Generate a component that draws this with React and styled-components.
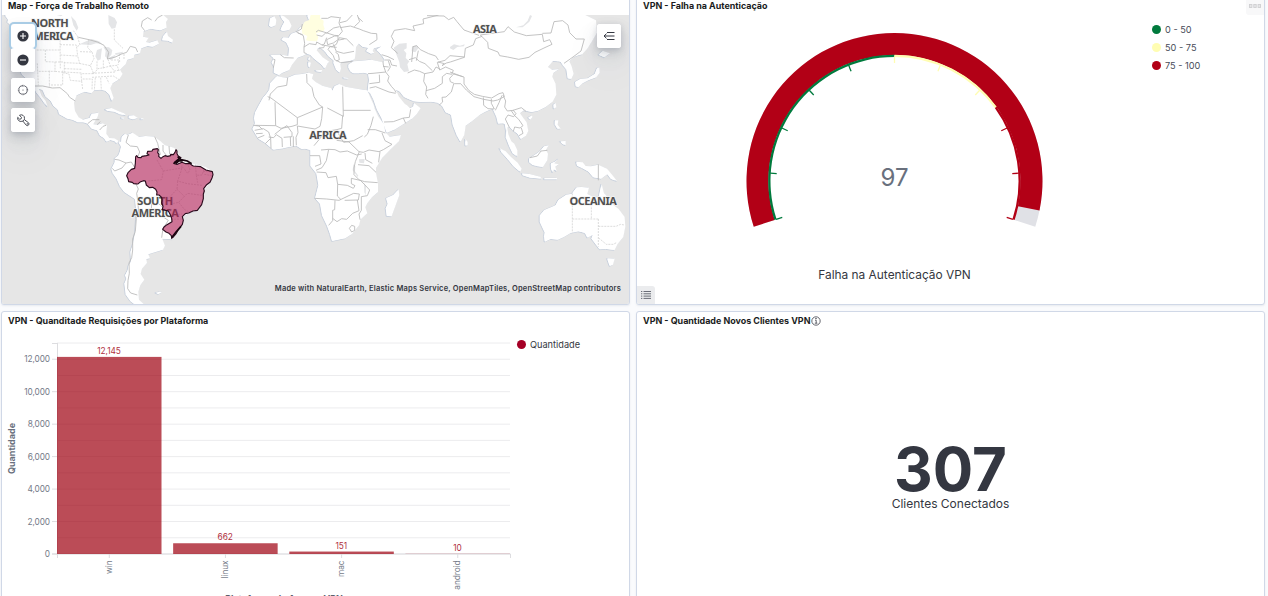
import React from "react";
import styled, { createGlobalStyle } from "styled-components";

const GlobalStyle = createGlobalStyle`
  * { box-sizing: border-box; }
  body { margin: 0; background: #fafbfd; overflow: hidden; }
`;

const Dashboard = styled.main`
  display: grid;
  grid-template-columns: 629px 629px;
  grid-template-rows: 309px 310px;
  gap: 6px;
  height: 600px;
  margin-top: -4px;
  padding-left: 1px;
  overflow: hidden;
  font-family: Inter, "Liberation Sans", sans-serif;
  color: #343741;
`;

const Panel = styled.section`
  position: relative;
  display: flex;
  flex-direction: column;
  background: #fff;
  border: 1px solid #d0d8e7;
  border-radius: 3px;
  box-shadow: 0 1px 2px rgba(152, 162, 179, 0.18);
  overflow: hidden;
`;

const PanelTitle = styled.h2`
  display: flex;
  align-items: center;
  gap: 1px;
  height: 18px;
  flex: none;
  margin: 0;
  padding: 0 6px 1px;
  font-size: 8.93px;
  font-weight: 700;
  line-height: 14px;
  color: #1a1c21;
  white-space: nowrap;
`;

const MapArea = styled.div`
  position: relative;
  flex: 1;
  background: #e6e6e6;
  overflow: hidden;
`;

const MapSvg = styled.svg`
  display: block;
  width: 628px;
  height: 289px;
`;

const MapControls = styled.div`
  position: absolute;
  left: 9px;
  top: 9px;
  display: flex;
  flex-direction: column;
  gap: 6px;
`;

const ControlGroup = styled.div`
  width: 24px;
  border-radius: 3px;
  background: #fff;
  box-shadow: 0 1px 5px rgba(65, 78, 101, 0.12), 0 4px 8px rgba(65, 78, 101, 0.15),
    0 8px 18px rgba(65, 78, 101, 0.12), 0 18px 40px rgba(65, 78, 101, 0.08);
`;

const ControlButton = styled.button`
  display: flex;
  align-items: center;
  justify-content: center;
  width: 24px;
  height: 24px;
  padding: 0;
  border: 0;
  border-radius: 3px;
  background: #fff;
  box-shadow: ${(p) => (p.$focused ? "0 0 0 2px #a9cce5" : "none")};
`;

const LegendToggle = styled(ControlGroup)`
  position: absolute;
  top: 9px;
  right: 8px;
`;

const Attribution = styled.div`
  position: absolute;
  right: 8px;
  bottom: 9px;
  font-size: 7.5px;
  font-weight: 600;
  line-height: 12px;
  letter-spacing: 0.2px;
  color: #343741;
  white-space: nowrap;
`;

const ChartSvg = styled.svg`
  display: block;
  flex: none;
  font-family: Inter, "Liberation Sans", sans-serif;
`;

const Legend = styled.ul`
  position: absolute;
  left: ${(p) => p.$left}px;
  top: ${(p) => p.$top}px;
  display: flex;
  flex-direction: column;
  margin: 0;
  padding: 0;
  list-style: none;
`;

const LegendItem = styled.li`
  display: flex;
  align-items: center;
  gap: 4px;
  height: 18px;
  font-size: 9.2px;
  color: ${(p) => p.$color || "#474c58"};
  white-space: nowrap;
  &::before {
    content: "";
    width: 9px;
    height: 9px;
    border-radius: 50%;
    background: ${(p) => p.$dot};
  }
`;

const CornerButton = styled.button`
  position: absolute;
  display: flex;
  align-items: center;
  justify-content: center;
  width: 18px;
  height: 18px;
  padding: 0;
  border: 0;
  background: ${(p) => (p.$bottom ? "#ebecee" : "#f8f8f9")};
  ${(p) =>
    p.$bottom
      ? "left: 0; bottom: 0; border-radius: 0 3px 0 0;"
      : "right: 0; top: 0; border-radius: 0 0 0 3px;"}
`;

const Metric = styled.div`
  display: flex;
  flex: 1;
  flex-direction: column;
  align-items: center;
  padding-top: 117px;
`;

const MetricValue = styled.strong`
  font-size: 60px;
  font-weight: 700;
  line-height: 44px;
  height: 49px;
`;

const MetricLabel = styled.span`
  font-size: 12px;
  line-height: 16px;
`;

/* Map geometry, in thirds of a pixel. */
const LAND = [
  "M14 45 L24 58 22 66 34 78 38 100 44 120 42 150 50 180 58 205 66 224 78 234 98 254 108 276 121 292 135 312 142 320 136 303 124 288 116 266 128 270 136 289 152 302 160 317 174 329 177 342 186 347 202 356 217 359 234 367 251 367 263 371 275 386 292 391 300 407 312 414 319 425 331 420 345 424 350 431 354 422 342 415 327 414 318 401 320 377 307 370 291 374 279 373 292 350 295 338 274 341 269 353 248 359 235 352 224 333 221 308 229 286 253 275 274 279 282 271 301 269 316 272 328 283 335 303 340 294 330 265 337 250 357 238 367 222 359 209 376 193 381 179 400 174 402 164 419 160 423 145 442 138 458 140 476 131 471 121 447 128 437 126 445 113 428 110 430 94 451 86 481 91 499 83 497 67 503 57 489 45 Z",
  "M489 108 L500 95 503 108 518 119 516 128 504 122 486 121 Z",
  "M314 328 L334 324 352 332 371 340 377 346 360 343 343 335 324 333 Z",
  "M386 347 L400 346 413 354 398 358 386 354 Z M363 352 l9 1 -2 3 -7 -1z M421 355 l8 0 0 3 -8 0z",
  "M354 424 L363 439 359 456 354 467 344 474 344 486 334 506 338 519 350 536 360 559 373 576 405 597 408 626 408 658 405 697 399 730 391 755 393 784 385 797 383 810 375 825 379 836 373 850 377 883 392 904 403 912 430 912 416 899 414 876 420 856 432 839 421 822 425 806 440 789 438 777 449 775 444 763 458 758 488 749 494 737 486 716 518 718 528 695 545 677 549 651 567 639 591 632 606 613 610 573 630 547 638 530 637 515 615 500 586 493 568 488 542 476 531 453 521 443 493 435 481 424 462 410 436 408 416 411 397 398 381 405 374 401 365 410 363 426 Z",
  "M466 878 L478 875 485 876 475 882 Z",
  "M830 228 L846 232 860 234 884 224 905 222 925 218 939 223 935 236 946 246 966 257 992 264 997 272 1003 258 1017 252 1036 260 1061 265 1088 269 1101 271 1109 290 1120 314 1123 326 1134 350 1151 373 1155 397 1168 410 1202 405 1196 424 1172 447 1146 473 1127 504 1127 519 1133 550 1133 576 1115 592 1101 610 1095 622 1101 640 1080 659 1077 675 1056 701 1035 715 996 723 990 702 981 677 966 646 960 611 945 594 955 555 949 520 931 497 931 468 931 450 915 446 905 447 889 437 865 441 850 445 820 449 795 428 775 416 766 401 757 386 765 370 762 354 765 337 777 314 790 291 800 280 808 268 810 249 Z",
  "M1195 568 L1197 586 1180 632 1174 649 1160 648 1157 624 1163 611 1158 594 1179 585 Z",
  "M810 165 L845 164 865 168 867 144 859 127 844 119 849 112 866 113 873 101 890 95 900 82 914 76 927 60 921 45 L1755 45 1787 61 1790 98 1776 122 1761 146 1746 163 1734 166 1721 171 1707 184 1714 199 1720 222 1713 237 1703 235 1699 208 1689 196 1682 185 1674 184 1658 183 1643 201 1655 209 1676 207 1659 219 1656 230 1666 252 1668 284 1657 305 1636 321 1614 332 1595 336 1570 331 1559 340 1569 354 1579 367 1584 393 1577 407 1562 417 1553 401 1539 391 1528 379 1521 383 1524 403 1533 424 1542 431 1551 451 1551 469 1538 460 1527 437 1517 411 1518 392 1514 371 1506 370 1494 371 1489 350 1478 326 1465 331 1452 337 1439 344 1416 363 1396 377 1392 405 1381 425 1370 405 1358 374 1353 344 1337 337 1326 317 1313 308 1293 305 1262 306 1242 304 1225 297 1212 291 1199 274 1187 269 1195 289 1213 311 1220 316 1229 325 1240 319 1241 309 1261 325 1249 343 1237 355 1211 371 1185 388 1160 398 1154 381 1144 353 1131 329 1120 298 1110 278 1103 274 1104 260 1107 239 1104 221 1090 218 1076 220 1060 220 1051 214 1045 202 1045 193 1060 184 1083 182 1113 179 1148 187 1155 180 1145 165 1135 154 1128 149 1144 139 1121 145 1117 153 1122 158 1113 161 1098 153 1104 143 1089 141 1076 130 1067 142 1066 160 1063 178 1045 184 1029 186 1020 192 1022 206 1018 218 1008 208 1000 188 1001 181 985 168 975 154 963 144 954 143 949 151 967 172 987 185 982 190 974 206 965 194 940 174 931 164 919 161 908 167 892 173 875 194 867 210 845 219 837 225 821 218 822 200 815 187 821 174 Z",
  "M840 45 L846 57 853 65 846 77 841 90 849 93 867 90 874 78 866 61 851 49 Z",
  "M810 54 L822 49 828 60 826 76 814 81 807 77 Z",
  "M926 171 L929 174 928 181 924 179 Z M924 185 L932 188 928 203 925 199 Z M945 211 L966 210 963 216 949 214 Z M1029 232 l17 2 -4 2 -12 -1z",
  "M1395 417 L1402 426 1402 436 1396 437 Z",
  "M1498 445 L1516 454 1532 471 1552 488 1564 506 1560 515 1541 499 1524 478 1505 457 Z",
  "M1565 520 L1588 522 1620 530 1624 536 1590 533 1568 526 Z M1632 534 h38 v4 h-38z",
  "M1587 475 L1606 463 1620 453 1631 439 1645 436 1637 450 1643 461 1641 481 1628 501 1614 499 1598 495 1587 486 Z",
  "M1652 490 L1663 485 1674 477 1662 490 1675 493 1665 500 1669 514 1661 507 1658 518 1653 506 Z",
  "M1728 485 L1747 487 1756 498 1772 499 1794 494 1820 506 1834 523 1850 543 1833 537 1822 522 1803 536 1780 532 1766 515 1746 504 1731 497 Z",
  "M1664 361 L1674 361 1672 374 1681 386 1672 386 1664 372 Z M1680 424 l16 -1 0 13 -8 -4z",
  "M1584 352 l10 -5 3 4 -7 8z M1660 313 l6 -4 2 13 -7 4z",
  "M1725 245 L1740 237 1762 235 1784 221 1791 203 1797 203 1798 219 1788 232 1764 241 1747 250 1735 261 1727 259 Z M1795 164 l12 -12 22 8 -16 12z",
  "M1619 646 L1632 630 1666 616 1675 599 1698 584 1715 581 1729 562 1744 561 1766 563 1761 582 1783 593 1796 590 1804 552 1811 580 1819 588 1834 611 1855 627 1873 651 1875 680 1869 711 1852 732 1843 750 1818 747 1799 748 1786 731 1774 715 1778 704 1762 713 1755 699 1735 694 1711 699 1691 711 1673 719 1651 717 1634 725 1632 708 1634 697 1619 665 Z",
  "M1821 775 L1843 776 1838 794 1829 798 Z",
];

const WATER = [
  "M325 45 L344 54 351 67 346 84 335 86 326 72 Z",
  "M213 48 L227 63 235 83 230 92 220 76 Z M170 45 l18 0 -5 4z",
  "M238 133 L260 123 275 117 297 124 307 132 288 130 272 135 Z",
  "M306 145 L291 150 286 169 293 182 302 178 304 159 Z",
  "M310 140 L327 142 337 151 334 164 323 176 315 169 317 153 Z",
  "M324 174 L345 165 347 170 331 180 Z M345 160 l24 -5 -2 6 -20 4z",
  "M1181 143 L1198 131 1220 129 1220 145 1211 150 1219 160 1217 174 1228 184 1222 193 1227 214 1212 216 1200 202 1198 186 1190 166 Z",
  "M1236 139 l15 -3 4 9 -9 12 -11 -3z",
  "M1350 141 L1362 133 1380 137 1394 133 1392 139 1372 141 1360 150 1350 145 Z",
  "M1548 82 L1570 76 1583 62 1590 45 1596 48 1588 65 1568 82 Z",
  "M1077 478 L1094 477 1092 490 1078 488 Z M1060 493 l6 6 -1 15 10 13 -2 4 -15 -20z M1092 549 l6 9 -1 26 5 13 -9 -20z",
];

const BORDERS = [
  /* North America */
  "M102 258 L128 258 157 264 180 263 202 281 209 292 226 303 M263 371 l15 -12 20 0 M291 374 l10 -9 M299 390 l10 -11 9 -3 M235 112 L267 119 292 126 312 136 326 157 322 177 344 172 365 162 380 157 391 139 407 143 413 156 M434 92 L424 79 427 63 443 53 455 60 M488 45 l-15 8 -8 11",
  /* South America */
  "M385 405 L378 427 391 438 412 440 419 456 414 469 M344 478 L357 480 378 489 366 504 344 513 337 505 M378 489 L394 486 405 504 M408 552 L415 567 410 580 413 600 416 636 409 655 406 694 398 717 398 750 395 773 387 789 388 820 384 841 383 866 392 879 412 885 M455 611 L476 611 487 621 M455 611 L454 628 480 645 505 661 489 686 485 713 M416 636 L440 642 454 628 M464 410 l9 20 8 34 M489 435 l0 18 10 13 M507 438 l2 25",
  /* Africa */
  "M863 233 L860 256 832 261 811 282 807 301 M803 290 L813 294 892 353 968 321 958 315 942 290 936 263 921 248 920 222 M825 307 L827 377 766 376 M892 353 L892 374 876 379 843 385 827 377 M968 321 L965 356 960 379 945 387 892 378 M1028 260 L1030 349 982 324 M1030 331 L1112 331 M1028 347 L1025 385 1010 389 1020 410 M1120 350 L1113 376 1102 403 1093 411 M1103 389 L1126 389 1156 399 M1146 399 L1155 422 1176 433 1150 449 1137 455 1107 450 M1010 389 L991 392 970 403 957 419 942 437 M1018 408 L1031 427 1061 422 1088 407 M1010 421 L1047 426 1077 455 1090 457 1107 450 M963 450 L986 448 1005 449 1020 456 1042 453 1070 465 1085 462 M986 448 L979 482 966 503 948 511 M930 467 L959 467 963 492 945 499 M950 516 L978 518 984 533 1009 529 1013 553 1042 556 1060 565 1065 557 1054 551 1054 535 1080 541 M1013 553 L1012 588 1023 599 M944 595 L980 597 1017 601 1061 580 1078 582 1075 600 1034 601 M1005 601 L1004 629 998 631 998 662 986 676 M998 655 L1011 665 1025 656 1040 658 1058 640 1077 632 1072 600 M1084 590 L1084 631 1077 642 1080 659 M1048 685 l7 -9 9 3 0 12 -9 5z M1074 494 L1107 497 1128 517 M1078 455 L1066 485 1062 504 1062 524 1078 540 1094 545 1133 548 M1095 459 L1097 479 1117 490 M1140 455 L1137 477 1136 487 M1080 540 L1095 555 1109 570 1102 587 1084 590",
  "M764 391 L790 386 806 396 812 415 796 431 M806 411 L821 413 829 404 846 415 847 441 M824 403 L844 387 861 377 876 398 876 410 851 412 M871 411 L872 438 M880 409 l0 32 M892 378 L894 398 888 412 889 436 M812 415 L813 445 M760 376 L777 378 787 388 M768 401 l20 -1 M773 414 l20 -8",
  /* Europe */
  "M820 178 L825 179 820 203 M841 164 L853 173 881 174 M887 94 L910 107 914 130 912 141 912 158 920 161 M912 141 L928 131 948 134 950 126 966 135 974 136 971 143 957 144 M892 94 l12 -7 3 -15 M893 99 l15 5 M948 96 L955 91 978 98 966 109 950 105 M978 98 L1003 106 1016 107 1027 94 1017 69 1021 51 M966 135 L973 132 980 113 M980 119 L1004 108 1014 108 1014 119 1000 129 983 134 Z M974 136 L996 140 1009 133 1018 113 1040 117 1060 137 M1017 120 L1033 117 M1000 133 L1009 154 1031 160 1062 154 M1010 142 L990 140 984 148 1000 167 1004 179 1022 188 1057 184 M1006 156 L1015 163 1018 179 1009 183 M1020 83 L1051 78 1078 87 1090 92 1114 100 1130 101 1131 119 1108 134 M1020 68 L1040 63 1057 45 M1072 45 L1079 65 1063 80 M1088 65 l-14 -13",
  "M979 100 l22 -16 18 -4 M964 55 l19 0 10 -5 26 3",
  /* Middle East and Central Asia */
  "M1104 221 L1119 220 1157 216 1150 195 1149 185 M1145 164 L1164 170 1182 179 M1155 180 L1170 180 1175 195 1191 198 M1165 182 L1171 201 1163 214 M1149 199 L1166 201 M1157 216 L1167 229 1163 243 1174 259 1184 270 1188 278 M1138 224 L1139 247 1108 251 M1109 264 L1127 260 1167 276 1187 280 M1152 366 L1180 365 1210 354 1217 370 M1210 354 L1228 352 1232 328 M1223 219 L1243 210 1259 214 1274 221 1271 244 1280 261 1277 283 1284 295 M1193 160 L1174 143 1182 124 1174 109 1183 91 1216 86 1244 92 1239 78 1271 71 1269 57 1316 45 M1235 186 L1239 140 1250 137 1261 149 1286 161 1307 168 1315 180 M1227 179 L1246 173 1258 184 1275 191 1297 212 M1249 182 L1255 152 M1274 221 L1299 216 1308 201 1320 207 M1278 272 L1304 265 1327 250 1327 230 1340 220 1355 223 1360 211 1337 201 1319 210 1312 187 1335 181 1350 167 1394 171 M1314 186 L1333 191 1326 197 1339 189 1351 186 1393 172 1396 145 1420 135 1427 116 1446 109 M1281 47 L1332 48 1346 59 1361 52 1371 65 1392 90 1437 106",
  /* South and East Asia */
  "M1441 105 L1463 127 1465 145 1494 156 1499 167 1523 171 1556 178 1587 172 1605 157 1632 144 1656 133 1649 119 1631 125 1627 103 1579 107 1543 96 1524 80 1513 95 1441 105 M1627 100 L1653 99 1662 65 1688 62 1704 75 1709 98 1728 117 1753 117 1743 153 1719 171 1692 190",
  "M1349 235 L1361 222 1392 231 1392 252 1407 272 1423 283 1447 289 1475 294 1497 281 1509 278 1513 290 1493 300 1479 303 1451 298 1422 290 1399 270 1382 251 1364 251 1351 245 Z M1361 252 L1354 276 1338 291 1326 292 1328 306 1318 315 M1450 292 L1451 316 1464 326 1483 327 1474 310 1474 297 M1506 286 L1497 308 1486 331 M1509 285 L1517 303 1514 321 1522 333 1540 331 1548 341 1541 350 1524 345 1516 357 1528 382 M1539 331 L1564 323 1578 334 M1533 331 L1544 347 1556 358 1569 377 1560 384 1544 381 1540 394 M1564 384 l5 16 -12 7 M1350 216 l38 14",
  "M1590 473 L1612 468 1623 453 1642 451 M1795 493 L1795 541",
];

const STATE_LINES = [
  "M110 150 L180 150 M136 150 L136 185 165 186 165 214 112 214 M165 186 L193 186 193 217 165 214 M112 190 L115 256 M148 212 L148 260 M188 212 L188 255 147 255 M188 218 L207 222 211 241 245 244 248 268 M180 110 L181 205 M180 134 L229 135 233 168 M181 165 L233 168 239 190 193 188 M193 206 L247 208 M233 112 L240 135 231 140 M240 155 L276 156 282 175 271 197 237 190 M271 197 L281 221 243 221 245 244 M266 119 L263 143 276 156 M248 237 L277 237 276 270 M286 233 L283 271 M302 233 L304 270 M319 232 L327 250 M276 220 L347 216 M276 232 L340 228 359 240 M291 184 L291 208 M310 181 L310 207 M324 178 L331 198 351 196 357 212 M333 180 L357 180 354 195 M358 162 L359 188 M372 162 L372 180 M343 88 L343 120 369 145 M220 92 L235 112 M193 216 L245 219 M281 221 L294 206 312 203 331 198 M331 198 L343 213 360 210",
  "M1717 580 L1717 698 M1717 657 L1795 657 M1774 595 L1774 657 M1795 657 L1795 740 M1795 679 L1848 679 1862 673 1873 675 M1796 714 L1819 733 1840 733 1851 727",
  "M471 480 L490 513 485 539 443 543 M490 513 L551 503 M531 466 L547 485 544 511 533 543 562 551 606 556 M562 488 L570 510 563 520 557 513 551 503 M586 493 L589 526 606 525 613 506 M589 526 L593 548 M613 523 L636 527 M609 514 L636 516 M533 543 L531 568 503 597 486 593 M531 568 L553 589 562 580 605 586 M553 589 L536 607 507 613 M536 607 L554 629 566 635 M507 646 L547 642 M513 658 L545 657",
];

const BRAZIL =
  "M407 470 L410 467 414 472 423 473 426 469 439 467 447 465 441 461 443 454 456 453 459 448 472 446 475 449 473 458 477 463 476 469 483 475 489 470 495 467 503 469 512 467 512 463 520 464 525 457 528 449 531 453 531 461 535 468 543 473 534 480 521 490 532 493 546 487 557 491 570 491 575 495 580 498 602 500 618 510 637 515 639 524 636 534 630 547 620 554 611 566 613 573 610 582 610 596 605 614 592 631 579 633 566 639 556 641 547 650 550 661 547 673 536 688 529 700 520 711 515 715 514 707 507 700 498 696 488 688 492 681 501 674 516 665 515 655 511 644 505 633 487 629 489 619 485 609 486 600 485 592 477 585 470 585 471 576 467 568 458 562 448 563 439 555 436 543 431 542 422 545 415 551 412 552 401 551 397 547 386 545 384 536 380 527 384 518 388 514 394 508 404 505 406 490 Z";

const LABELS = [
  [149, 82, "NORTH"],
  [149, 119, "AMERICA"],
  [465, 614, "SOUTH"],
  [465, 652, "AMERICA"],
  [983, 416, "AFRICA"],
  [1454, 99, "ASIA"],
  [1779, 614, "OCEANIA"],
];

function WorldMap() {
  return (
    <MapSvg viewBox="6 45 1884 867" preserveAspectRatio="none">
      <g stroke="#c9d1dd" strokeWidth="3" fill="#fff" strokeLinejoin="round">
        {LAND.map((d, i) => <path key={i} d={d} transform="translate(-1.5 1)" />)}
      </g>
      <g fill="#fff">{LAND.map((d, i) => <path key={i} d={d} transform="translate(1 0)" />)}</g>
      <g fill="#e4e5e7">{WATER.map((d, i) => <path key={i} d={d} />)}</g>
      <path
        d="M932 45 L961 45 960 55 971 62 970 75 974 86 970 94 948 99 955 112 951 124 929 123 918 121 922 108 907 101 905 82 914 65 928 60 Z"
        fill="#fffee0"
      />
      <g fill="none" stroke="#d5d5d5" strokeWidth="2.5" strokeDasharray="6 3">
        {STATE_LINES.map((d, i) => <path key={i} d={d} />)}
      </g>
      <g fill="none" stroke="#b9b9b9" strokeWidth="2.6" strokeLinejoin="round">
        {BORDERS.map((d, i) => <path key={i} d={d} />)}
      </g>
      <g
        fontFamily='"Noto Sans", sans-serif'
        fontSize="33"
        fontWeight="700"
        letterSpacing="-1.5"
        fill="#505050"
        stroke="#f4f4f4"
        strokeWidth="4"
        paintOrder="stroke"
        textAnchor="middle"
      >
        {LABELS.map(([x, y, text]) => <text key={x + "-" + y} x={x} y={y}>{text}</text>)}
      </g>
      <path d={BRAZIL} fill="#b01f56" fillOpacity="0.62" stroke="#2a0a1c" strokeWidth="3.4" strokeLinejoin="round" />
      <path
        d="M522 489 L533 480 541 474 M527 491 L538 482 548 483 M533 470 L543 479 562 483 575 491 M516 712 L528 696 543 679"
        fill="none"
        stroke="#18040e"
        strokeWidth="5"
      />
    </MapSvg>
  );
}

const PlusIcon = () => (
  <svg width="12" height="12" viewBox="0 0 12 12">
    <circle cx="6" cy="6" r="5.6" fill="#343741" />
    <path d="M6 3v6M3 6h6" stroke="#fff" strokeWidth="1.1" />
  </svg>
);

const MinusIcon = () => (
  <svg width="12" height="12" viewBox="0 0 12 12">
    <circle cx="6" cy="6" r="5.6" fill="#343741" />
    <path d="M3 6h6" stroke="#fff" strokeWidth="1.1" />
  </svg>
);

const TargetIcon = () => (
  <svg width="12" height="12" viewBox="0 0 12 12" fill="none" stroke="#4b4e58" strokeWidth="0.85">
    <circle cx="6" cy="6" r="4.5" strokeDasharray="5.6 1.45" strokeDashoffset="-0.7" />
    <path d="M6 .8v2M6 9.2v2M.8 6h2M9.2 6h2" />
    <circle cx="6" cy="6" r=".6" fill="#4b4e58" stroke="none" />
  </svg>
);

const WrenchIcon = () => (
  <svg width="13" height="13" viewBox="0 0 16 16" fill="none" stroke="#40434d" strokeWidth="1.15" strokeLinejoin="round">
    <path d="M3 1.7 L5.6 4.2 5 6 3.2 6.4 .9 4.1 A4 4 0 0 0 6 9 l1.2 -.3 4 4.9 a2 2 0 0 0 3 -2.8 L9 6.9 9.2 5.6 A4 4 0 0 0 3 1.7 Z" />
    <path d="M7 8.8 L9.1 6.9" />
    <circle cx="12.6" cy="12.2" r=".4" />
  </svg>
);

const MenuLeftIcon = () => (
  <svg width="12" height="10" viewBox="0 0 12 10" fill="none" stroke="#343741" strokeWidth="1">
    <path d="M4 1.5h7.5M1 5h10.5M4 8.5h7.5M3.5 2.7L1 5l2.5 2.3" />
  </svg>
);

const InfoIcon = () => (
  <svg width="10" height="10" viewBox="0 0 10 10" fill="none" stroke="#343741" strokeWidth=".75">
    <circle cx="5" cy="5" r="4.2" />
    <path d="M4 4.2h1.2v3M3.8 7.2h2.6" />
    <circle cx="5" cy="2.6" r=".35" fill="#343741" />
  </svg>
);

const ListIcon = () => (
  <svg width="10" height="10" viewBox="0 0 10 10" stroke="#5a5e68" strokeWidth=".9">
    <path d="M0 1.5h1.3M2.5 1.5H10M0 3.8h1.3M2.5 3.8H10M0 6.1h1.3M2.5 6.1H10M0 8.4h1.3M2.5 8.4H10" />
  </svg>
);

const DotsIcon = () => (
  <svg width="12" height="4" viewBox="0 0 12 4" fill="#e6e6e7" stroke="#cfcfd1" strokeWidth=".9">
    <rect x=".5" y=".5" width="2.4" height="3" />
    <rect x="4.8" y=".5" width="2.4" height="3" />
    <rect x="9.1" y=".5" width="2.4" height="3" />
  </svg>
);

/* Gauge drawing: angles in degrees clockwise from the top. */
const polar = (r, deg) => {
  const a = (deg * Math.PI) / 180;
  return [257.5 + r * Math.sin(a), 166 - r * Math.cos(a)];
};

const ringPath = (r0, r1, from, to) => {
  const large = to - from > 180 ? 1 : 0;
  return `M${polar(r1, from)} A${r1} ${r1} 0 ${large} 1 ${polar(r1, to)} L${polar(r0, to)} A${r0} ${r0} 0 ${large} 0 ${polar(r0, from)} Z`;
};

const GREEN = "#007a3d";
const YELLOW = "#fffdb2";
const RED = "#b20016";
const tickColor = (i) => (i < 5 ? GREEN : i < 8 ? YELLOW : RED);

function Gauge() {
  return (
    <ChartSvg width="627" height="289" viewBox="0 0 627 289">
      <path d={ringPath(126, 148, -108, 108)} fill="#e0e1e6" />
      <path d={ringPath(126, 148, -108, 101.52)} fill={RED} />
      <path d={ringPath(124, 126.3, -108, 0)} fill={GREEN} />
      <path d={ringPath(124, 126.3, 0, 54)} fill={YELLOW} />
      <path d={ringPath(124, 126.3, 54, 108)} fill={RED} />
      {Array.from({ length: 11 }, (_, i) => {
        const [x1, y1] = polar(124.5, -108 + i * 21.6);
        const [x2, y2] = polar(118, -108 + i * 21.6);
        return <line key={i} x1={x1} y1={y1} x2={x2} y2={y2} stroke={tickColor(i)} strokeWidth="1.3" />;
      })}
      <text x="257.5" y="171" textAnchor="middle" fontSize="24" fill="#69707d">97</text>
      <text x="257.5" y="264" textAnchor="middle" fontSize="11.9" fill="#343741">Falha na Autenticação VPN</text>
    </ChartSvg>
  );
}

const BARS = [
  { name: "win", value: 12145, label: "12,145", labelY: 24 },
  { name: "linux", value: 662, label: "662", labelY: 210 },
  { name: "mac", value: 151, label: "151", labelY: 219 },
  { name: "android", value: 10, label: "10", labelY: 221 },
];
const BASE = 224;
const UNIT = 16.23 / 1000;

function BarChart() {
  return (
    <ChartSvg width="627" height="290" viewBox="0 0 627 290">
      {Array.from({ length: 14 }, (_, i) => {
        const y = BASE - i * 1000 * UNIT;
        return <line key={i} x1="55" x2="508" y1={y} y2={y} stroke="#ececee" />;
      })}
      <path d={`M55.5 13V228 M50 13.5H55 M50 ${BASE}H508.5 M508.5 ${BASE}v4`} fill="none" stroke="#dddde0" />
      {[0, 2, 4, 6, 8, 10, 12].map((n) => {
        const y = BASE - n * 1000 * UNIT;
        return (
          <g key={n}>
            <line x1="50" x2="55" y1={y} y2={y} stroke="#dddde0" />
            <text x="48" y={y + 3} textAnchor="end" fontSize="8.3" letterSpacing="-0.1" fill="#747a87">{n ? `${n},000` : "0"}</text>
          </g>
        );
      })}
      {BARS.map((bar, i) => {
        const x = 55 + i * 116.15;
        const h = bar.value * UNIT;
        return (
          <g key={bar.name}>
            <rect x={x} y={BASE - h} width="104.5" height={h} fill="#9e000f" fillOpacity="0.7" />
            <line x1={x + 52.3} x2={x + 52.3} y1={BASE} y2={BASE + 4} stroke="#dddde0" />
            <text x={x + 52} y={bar.labelY} textAnchor="middle" fontSize="8.3" letterSpacing="-0.1" fill="#b03040">{bar.label}</text>
            <text transform={`translate(${x + 54.7} 230.5) rotate(-90)`} textAnchor="end" fontSize="8.3" letterSpacing="-0.08" fill="#747a87">{bar.name}</text>
          </g>
        );
      })}
      <text transform="translate(13 118.5) rotate(-90)" textAnchor="middle" fontSize="9" fontWeight="700" fill="#69707d">Quantidade</text>
      <text x="282" y="272" textAnchor="middle" fontSize="9" fontWeight="700" fill="#5b606c">Plataforma de Acesso VPN</text>
    </ChartSvg>
  );
}

export default function App() {
  return (
    <>
      <GlobalStyle />
      <Dashboard>
        <Panel>
          <PanelTitle>Map - Força de Trabalho Remoto</PanelTitle>
          <MapArea>
            <WorldMap />
            <MapControls>
              <ControlGroup>
                <ControlButton $focused aria-label="Zoom in"><PlusIcon /></ControlButton>
                <ControlButton aria-label="Zoom out"><MinusIcon /></ControlButton>
              </ControlGroup>
              <ControlGroup><ControlButton aria-label="Fit to data"><TargetIcon /></ControlButton></ControlGroup>
              <ControlGroup><ControlButton aria-label="Tools"><WrenchIcon /></ControlButton></ControlGroup>
            </MapControls>
            <LegendToggle><ControlButton aria-label="Layers"><MenuLeftIcon /></ControlButton></LegendToggle>
            <Attribution>
              Made with NaturalEarth, Elastic Maps Service, OpenMapTiles, OpenStreetMap contributors
            </Attribution>
          </MapArea>
        </Panel>

        <Panel>
          <PanelTitle>VPN - Falha na Autenticação</PanelTitle>
          <Gauge />
          <Legend $left={515} $top={23}>
            <LegendItem $dot={GREEN}>0 - 50</LegendItem>
            <LegendItem $dot={YELLOW}>50 - 75</LegendItem>
            <LegendItem $dot={RED}>75 - 100</LegendItem>
          </Legend>
          <CornerButton aria-label="Panel options"><DotsIcon /></CornerButton>
          <CornerButton $bottom aria-label="Toggle legend"><ListIcon /></CornerButton>
        </Panel>

        <Panel>
          <PanelTitle>VPN - Quanditade Requisições por Plataforma</PanelTitle>
          <BarChart />
          <Legend $left={515} $top={23}>
            <LegendItem $dot="#a50026" $color="#343741">Quantidade</LegendItem>
          </Legend>
        </Panel>

        <Panel>
          <PanelTitle>VPN - Quantidade Novos Clientes VPN<InfoIcon /></PanelTitle>
          <Metric>
            <MetricValue>307</MetricValue>
            <MetricLabel>Clientes Conectados</MetricLabel>
          </Metric>
        </Panel>
      </Dashboard>
    </>
  );
}
